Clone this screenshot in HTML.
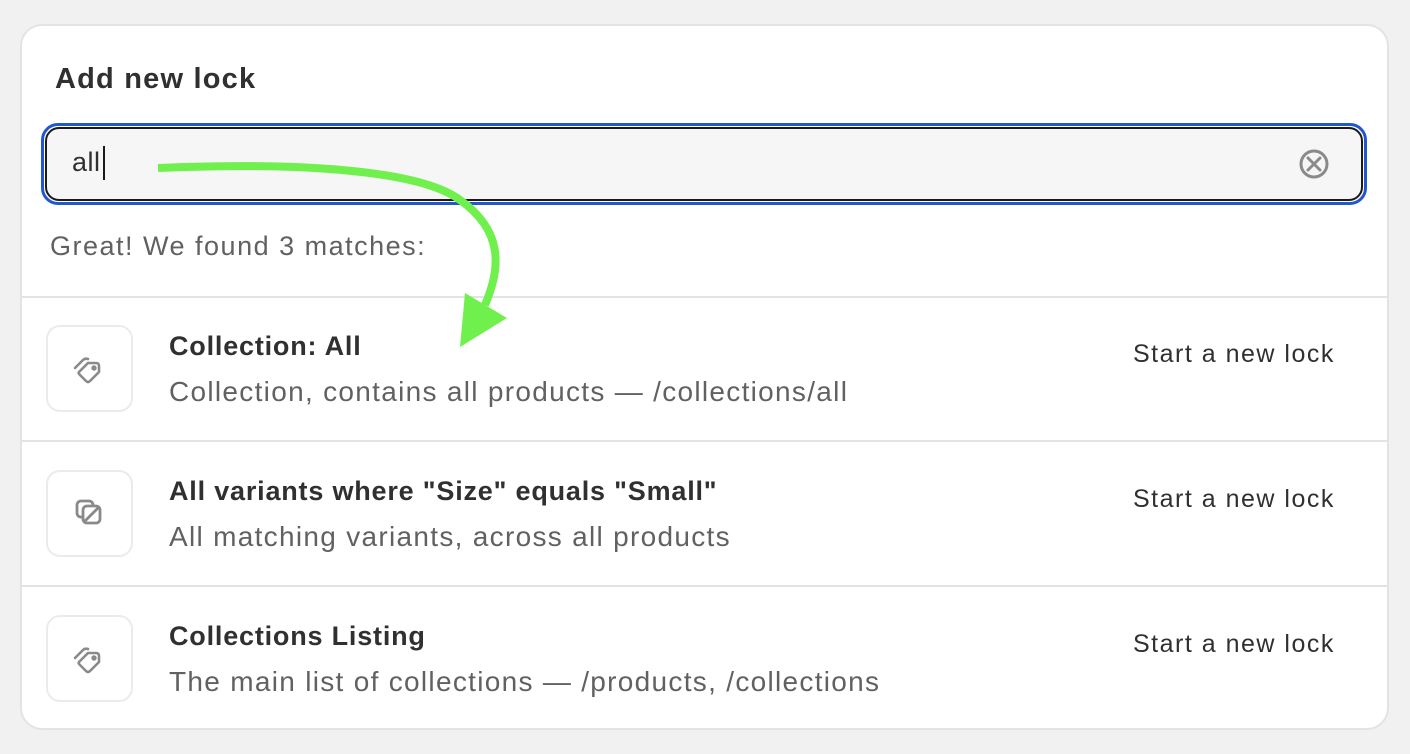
<!DOCTYPE html>
<html><head><meta charset="utf-8"><style>
*{margin:0;padding:0;box-sizing:border-box}
body{width:1410px;height:754px;background:#f1f1f1;font-family:"Liberation Sans",sans-serif;position:relative;overflow:hidden}
.card{position:absolute;left:20px;top:24px;width:1369px;height:706px;background:#fff;border:2px solid #e3e3e3;border-radius:22px;overflow:hidden}
.abs{position:absolute}
h1{position:absolute;left:55px;top:63px;font-size:29px;letter-spacing:1.2px;font-weight:bold;color:#303030}
.inp{position:absolute;left:41px;top:123px;width:1326px;height:82px;border:3px solid #2257d0;border-radius:17px}
.inp2{position:absolute;left:45px;top:127px;width:1318px;height:74px;border:2px solid #1a1a1a;border-radius:14px;background:#f6f6f6}
.val{position:absolute;left:72px;top:147px;font-size:27px;letter-spacing:0.5px;color:#303030}
.caret{position:absolute;left:103px;top:146px;width:2px;height:34px;background:#1a1a1a}
.found{position:absolute;left:50px;top:231px;font-size:27px;letter-spacing:1.5px;color:#616161}
.hr{position:absolute;left:20px;width:1369px;height:2px;background:#e3e3e3}
.ic{position:absolute;left:46px;width:87px;height:87px;border:2px solid #ebebeb;border-radius:14px;background:#fff}
.t{position:absolute;left:169px;font-size:27px;letter-spacing:0.8px;font-weight:bold;color:#303030}
.s{position:absolute;left:169px;font-size:28px;letter-spacing:1.3px;color:#616161}
.b{position:absolute;left:1133px;font-size:25px;letter-spacing:1.5px;color:#303030}
</style></head><body>
<div class="card"></div>
<h1>Add new lock</h1>
<div class="inp"></div><div class="inp2"></div>
<div class="val">all</div><div class="caret"></div>
<svg class="abs" style="left:1296px;top:147px" width="36" height="36" viewBox="0 0 36 36"><circle cx="18" cy="17" r="13" fill="none" stroke="#8a8a8a" stroke-width="3"/><path d="M12 11l12 12M24 11l-12 12" stroke="#8a8a8a" stroke-width="3" stroke-linecap="round"/></svg>
<div class="found">Great! We found 3 matches:</div>
<div class="hr" style="top:296px"></div>
<div class="hr" style="top:440px"></div>
<div class="hr" style="top:585px"></div>

<div class="ic" style="top:325px"></div>
<svg class="abs" style="left:70px;top:350px" width="40" height="40" viewBox="0 0 40 40" fill="none" stroke="#8a8a8a" stroke-width="2.6" stroke-linejoin="round" stroke-linecap="round"><path d="M9 22L18 13L26 13Q29 13 29 16L29 22L20 31Q18 33 16 31L10 25Q8 23 9 22Z"/><path d="M5 18L13 10Q15 8 18 9"/><circle cx="24" cy="18" r="1.4" fill="#8a8a8a"/></svg>
<div class="t" style="top:331px">Collection: All</div>
<div class="s" style="top:376px">Collection, contains all products — /collections/all</div>
<div class="b" style="top:340px">Start a new lock</div>

<div class="ic" style="top:470px"></div>
<svg class="abs" style="left:72px;top:496px" width="36" height="36" viewBox="0 0 36 36" fill="none" stroke="#8a8a8a" stroke-width="2.8" stroke-linejoin="round"><rect x="5" y="5" width="16" height="16" rx="4"/><rect x="11" y="10" width="17" height="17" rx="4" fill="#fff"/><path d="M13 25l13-13"/></svg>
<div class="t" style="top:476px">All variants where "Size" equals "Small"</div>
<div class="s" style="top:521px">All matching variants, across all products</div>
<div class="b" style="top:485px">Start a new lock</div>

<div class="ic" style="top:615px"></div>
<svg class="abs" style="left:70px;top:640px" width="40" height="40" viewBox="0 0 40 40" fill="none" stroke="#8a8a8a" stroke-width="2.6" stroke-linejoin="round" stroke-linecap="round"><path d="M9 22L18 13L26 13Q29 13 29 16L29 22L20 31Q18 33 16 31L10 25Q8 23 9 22Z"/><path d="M5 18L13 10Q15 8 18 9"/><circle cx="24" cy="18" r="1.4" fill="#8a8a8a"/></svg>
<div class="t" style="top:621px">Collections Listing</div>
<div class="s" style="top:666px">The main list of collections — /products, /collections</div>
<div class="b" style="top:630px">Start a new lock</div>

<svg class="abs" style="left:0;top:0" width="1410" height="754"><path d="M158 168 C300 162 420 170 460 200 C505 232 500 270 485 305" fill="none" stroke="#6ff04c" stroke-width="8"/><polygon points="460,347 465,293 507,318" fill="#6ff04c"/></svg>
</body></html>
